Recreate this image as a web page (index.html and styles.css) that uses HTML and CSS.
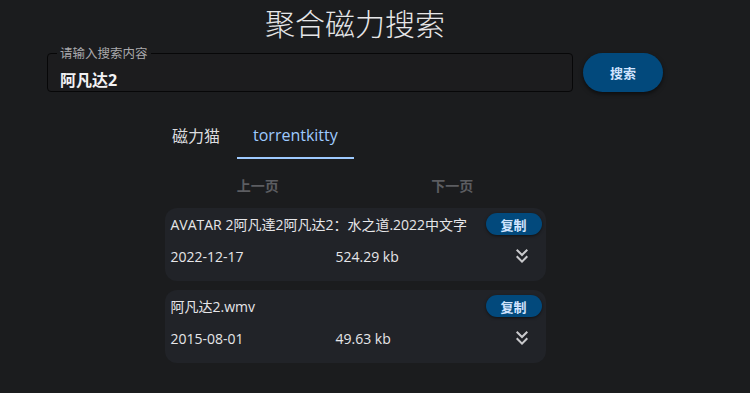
FILE: index.html
```html
<!DOCTYPE html>
<html lang="zh-CN">
<head>
<meta charset="utf-8">
<title>聚合磁力搜索</title>
<link rel="stylesheet" href="styles.css">
</head>
<body>
<main class="page">
  <h1 class="title">聚合磁力搜索</h1>
  <div class="search-row">
    <div class="field">
      <span class="field-label">请输入搜索内容</span>
      <div class="field-value">阿凡达2</div>
    </div>
    <button class="search-btn">搜索</button>
  </div>
  <div class="tabs">
    <div class="tab">磁力猫</div>
    <div class="tab active">torrentkitty</div>
  </div>
  <div class="column">
    <div class="pager">
      <span class="pager-btn">上一页</span>
      <span class="pager-btn">下一页</span>
    </div>
    <div class="card">
      <div class="card-top">
        <span class="card-title">AVATAR 2阿凡達2阿凡达2：水之道.2022中文字</span>
        <button class="copy-btn">复制</button>
      </div>
      <div class="card-bottom">
        <span class="date">2022-12-17</span>
        <span class="size">524.29 kb</span>
        <svg class="expand" viewBox="0 0 24 24" width="24" height="24"><path d="M18 6.41L16.59 5 12 9.58 7.41 5 6 6.41l6 6z M18 13l-1.41-1.41L12 16.17l-4.59-4.58L6 13l6 6z" fill="#c9c9cc"/></svg>
      </div>
    </div>
    <div class="card">
      <div class="card-top">
        <span class="card-title">阿凡达2.wmv</span>
        <button class="copy-btn">复制</button>
      </div>
      <div class="card-bottom">
        <span class="date">2015-08-01</span>
        <span class="size">49.63 kb</span>
        <svg class="expand" viewBox="0 0 24 24" width="24" height="24"><path d="M18 6.41L16.59 5 12 9.58 7.41 5 6 6.41l6 6z M18 13l-1.41-1.41L12 16.17l-4.59-4.58L6 13l6 6z" fill="#c9c9cc"/></svg>
      </div>
    </div>
  </div>
</main>
</body>
</html>
```

FILE: styles.css
```css
* { box-sizing: border-box; }
html, body { margin: 0; padding: 0; }
body {
  background: #1b1c1e;
  color: #e3e2e6;
  font-family: "Open Sans", "Noto Sans CJK SC", sans-serif;
  width: 750px;
  height: 393px;
  overflow: hidden;
}
.page {
  width: 710px;
  display: flex;
  flex-direction: column;
  align-items: center;
}
.title {
  margin: 0;
  font-size: 30px;
  font-weight: 300;
  line-height: 44px;
  color: #e6e6e8;
  font-family: "Noto Sans CJK SC", sans-serif;
}
.search-row {
  margin-top: 9px;
  display: flex;
  gap: 10px;
  width: 616px;
}
.field {
  position: relative;
  width: 526px;
  height: 39px;
  border: 1px solid #070708;
  border-radius: 4px;
  background: #1c1c1e;
  padding: 16px 12px 0 12px;
}
.field-label {
  position: absolute;
  left: 9px;
  top: -8px;
  padding: 0 3px;
  background: #1b1c1e;
  font-size: 12.5px;
  line-height: 14px;
  color: #a9a9ac;
  font-family: "Noto Sans CJK SC", sans-serif;
}
.field-value {
  font-size: 16px;
  font-weight: 700;
  line-height: 20px;
  color: #f2f2f4;
}
.search-btn {
  width: 80px;
  height: 39px;
  border: none;
  border-radius: 20px;
  background: #02497c;
  color: #d1e4ff;
  font-family: "Noto Sans CJK SC", sans-serif;
  font-size: 13px;
  font-weight: 700;
  box-shadow: 0 2px 4px rgba(0, 0, 0, 0.55);
  padding: 0;
}
.tabs {
  margin-top: 19px;
  width: 398px;
  display: flex;
}
.tab {
  height: 48px;
  padding: 2px 16px 0;
  display: flex;
  align-items: center;
  font-size: 16px;
  color: #dcdcdf;
  border-bottom: 2px solid transparent;
}
.tab + .tab { margin-left: 1px; }
.tab.active {
  color: #9ecaff;
  border-bottom-color: #9ecaff;
}
.column {
  width: 381px;
  display: flex;
  flex-direction: column;
}
.pager {
  margin: 6px -4px 0;
  height: 40px;
  display: flex;
}
.pager-btn {
  flex: 1;
  display: flex;
  align-items: center;
  justify-content: center;
  font-family: "Noto Sans CJK SC", sans-serif;
  font-size: 14px;
  font-weight: 700;
  color: #5c5d61;
}
.card {
  margin-top: 3px;
  height: 73px;
  border-radius: 12px;
  background: #212328;
  padding: 5px 4px 0 6px;
}
.card + .card { margin-top: 9px; }
.card-top {
  height: 22px;
  display: flex;
  align-items: center;
  justify-content: space-between;
}
.card-title {
  font-size: 14px;
  color: #e6e6e9;
  white-space: nowrap;
}
.copy-btn {
  width: 56px;
  height: 22px;
  border: none;
  border-radius: 11px;
  background: #02497c;
  color: #d1e4ff;
  font-family: "Noto Sans CJK SC", sans-serif;
  font-size: 13px;
  font-weight: 700;
  padding: 0;
  box-shadow: 0 1px 3px rgba(0, 0, 0, 0.5);
}
.card-bottom {
  margin-top: 9px;
  height: 24px;
  display: flex;
  align-items: center;
  padding-right: 8px;
}
.date {
  width: 165px;
  font-size: 14px;
  color: #e6e6e9;
}
.size {
  flex: 1;
  font-size: 14px;
  color: #e6e6e9;
}
.expand { display: block; }
```
